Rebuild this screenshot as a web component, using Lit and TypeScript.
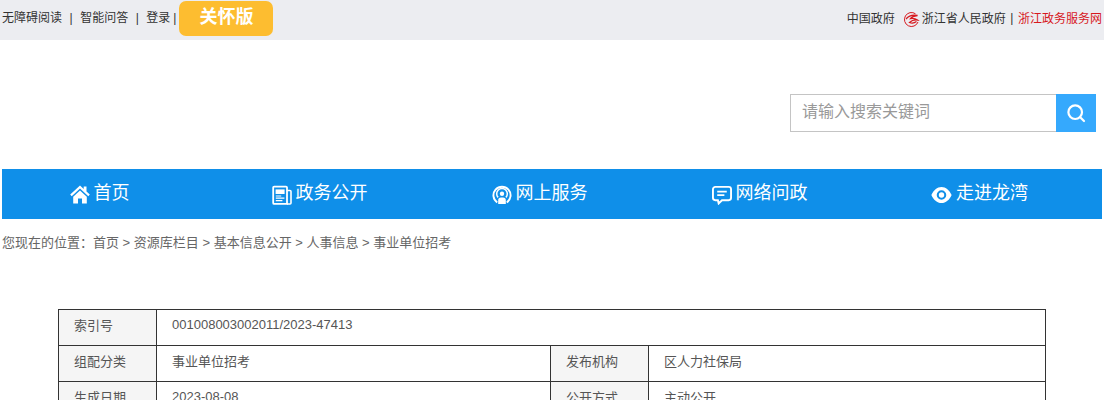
import { LitElement, html, css, svg } from "lit";
import { customElement } from "lit/decorators.js";

const icons = {
  home: svg`<svg class="ic" width="20" height="20" viewBox="0 0 20 20" fill="#fff"><path d="M10 .5 .2 9.600 1.700 11.200 10 3.600 18.300 11.200 19.800 9.600 16.500 6.500V1.500h-2.800v2.400Z"/><path d="M10 5.600 3.200 11.800V18.500h4.800v-5h4v5h4.800V11.800Z"/></svg>`,
  paper: svg`<svg class="ic" width="20" height="20" viewBox="0 0 20 20" fill="none" stroke="#fff"><path d="M1.200 2.600a1 1 0 0 1 1-1H14a1 1 0 0 1 1 1V18.900H2.200a1 1 0 0 1-1-1Z" stroke-width="1.800"/><path d="M15 5.500h3a1 1 0 0 1 1 1V18a1 1 0 0 1-1 1h-3" stroke-width="1.600"/><rect x="3.600" y="4.400" width="9" height="4.600" fill="#fff" stroke="none"/><path d="M3.800 11h5.400M3.800 13.200h8.600M3.800 15.600h6.600" stroke-width="1.200"/></svg>`,
  signal: svg`<svg class="ic" width="20" height="20" viewBox="0 0 21 21" fill="none" stroke="#fff"><path d="M5.500 18.300a9 9 0 1 1 10 0" stroke-width="2"/><path d="M6.400 13a5.600 5.600 0 1 1 8.200 0" stroke-width="1.600"/><circle cx="10.500" cy="9.200" r="2.300" fill="#fff" stroke="none"/><path d="M6.500 20V16a3 3 0 0 1 3-3h2a3 3 0 0 1 3 3v4Z" fill="#fff" stroke="none"/></svg>`,
  chat: svg`<svg class="ic" width="20" height="20" viewBox="0 0 21 21" fill="none" stroke="#fff"><path d="M3.500 2h14a2.500 2.500 0 0 1 2.500 2.500v9a2.500 2.500 0 0 1-2.500 2.500H10.500L7 19.400 6.200 16H3.500A2.500 2.500 0 0 1 1 13.500v-9A2.500 2.500 0 0 1 3.500 2Z" stroke-width="2"/><path d="M5.500 7h10M5.500 10.600h7.500" stroke-width="1.800"/></svg>`,
  eye: svg`<svg class="ic" width="21" height="20" viewBox="0 0 22 20" fill="#fff"><path fill-rule="evenodd" d="M11 1.500C15.500 1.500 19.500 5 21.600 10 19.500 15 15.500 18.500 11 18.500S2.500 15 .4 10C2.500 5 6.500 1.500 11 1.500ZM11 5a5 5 0 1 0 0 10 5 5 0 0 0 0-10Z"/><circle cx="11" cy="10" r="2.800"/></svg>`,
};

@customElement("app-root")
export class AppRoot extends LitElement {
  static styles = css`
    :host { display: block; height: 400px; overflow: hidden; background: #fff;
      font-family: "Liberation Sans", "Noto Sans CJK SC", sans-serif; }
    .top { height: 40px; background: #ecedf1; display: flex; justify-content: space-between; font-size: 12px; color: #333; }
    .left { display: flex; align-items: flex-start; padding-left: 2px; }
    .left span { line-height: 37px; white-space: nowrap; }
    .left .sep { margin: 0 7.5px; }
    .left .sep.last { margin: 0 3px; }
    .care { margin: 1px 0 0 0; width: 94px; height: 35px; box-sizing: border-box; border-radius: 7px; background: #fdbd30;
      color: #fff; font-size: 18px; font-weight: bold; text-align: center; line-height: 32px; }
    .right { display: flex; align-items: center; height: 35px; padding-right: 2px; }
    .right .gov { margin-right: 8px; }
    .logo { margin: 3px 2px 0 0; }
    .right .sep { margin: 0 4.5px; }
    .red { color: #d7191f; }
    .search { display: flex; justify-content: flex-end; padding: 54px 8px 37px 0; }
    .input { width: 266px; height: 38px; box-sizing: border-box; border: 1px solid #c4c4c4; border-right: 0; padding-left: 11px;
      font-size: 16px; line-height: 34px; color: #999; }
    .btn { width: 40px; height: 38px; background: #35a9fd; display: flex; align-items: center; justify-content: center; }
    .nav { margin: 0 2px; height: 50px; background: #0f8fe9; display: flex; gap: 124px; padding-left: 50px; box-sizing: border-box; }
    .item { width: 96px; flex: none; display: flex; justify-content: center; align-items: center; color: #fff;
      font-size: 18px; white-space: nowrap; }
    .item span { display: block; margin: 0 0 7px 4px; }
    .ic { flex: none; margin: 2px 0 0 -1px; }
    .crumb { margin-top: 16px; padding-left: 2px; font-size: 13px; line-height: 16px; color: #666; white-space: pre; }
    table { margin: 58px 0 0 58px; width: 988px; border-collapse: collapse; table-layout: fixed; font-size: 13px; color: #555; }
    td { border: 1px solid #333; height: 36px; padding: 0 15px 6px; box-sizing: border-box; }
    td.l { background: #f5f5f5; }
  `;

  render() {
    const rows = [
      ["组配分类", "事业单位招考", "发布机构", "区人力社保局"],
      ["生成日期", "2023-08-08", "公开方式", "主动公开"],
    ];
    return html`
      <div class="top">
        <div class="left">
          <span>无障碍阅读</span><span class="sep">|</span><span>智能问答</span><span class="sep">|</span><span>登录</span><span class="sep last">|</span>
          <div class="care">关怀版</div>
        </div>
        <div class="right">
          <span class="gov">中国政府</span>
          <svg class="logo" width="17" height="17" viewBox="0 0 17 17" fill="none" stroke="#d7191f">
            <path d="M12.500 2.800A7 7 0 1 0 15 11" stroke-width="1"/>
            <path d="M3 8C6 4.500 10.500 3.500 14.500 4.500 11 5 8.500 6 7.500 7.500 10 7 12.500 7.500 14.500 9 11.500 8.700 8.500 9.500 6.500 11.500 9 12.500 11.500 12 13.500 10.500" stroke-width="1.300"/>
          </svg>
          <span>浙江省人民政府</span><span class="sep">|</span><span class="red">浙江政务服务网</span>
        </div>
      </div>
      <div class="search">
        <div class="input">请输入搜索关键词</div>
        <div class="btn">
          <svg width="20" height="20" viewBox="0 0 20 20" fill="none" stroke="#fff" stroke-width="2.200"><circle cx="9.200" cy="9.200" r="6.800"/><path d="M14.200 14.200 18 18" stroke-linecap="round"/></svg>
        </div>
      </div>
      <div class="nav">
        <div class="item">${icons.home}<span>首页</span></div>
        <div class="item">${icons.paper}<span>政务公开</span></div>
        <div class="item">${icons.signal}<span>网上服务</span></div>
        <div class="item">${icons.chat}<span>网络问政</span></div>
        <div class="item">${icons.eye}<span>走进龙湾</span></div>
      </div>
      <div class="crumb">您现在的位置：首页 &gt; 资源库栏目 &gt; 基本信息公开 &gt; 人事信息 &gt; 事业单位招考</div>
      <table>
        <colgroup><col style="width:98px"><col style="width:394px"><col style="width:98px"><col></colgroup>
        <tr><td class="l">索引号</td><td colspan="3">001008003002011/2023-47413</td></tr>
        ${rows.map((r) => html`<tr><td class="l">${r[0]}</td><td>${r[1]}</td><td class="l">${r[2]}</td><td>${r[3]}</td></tr>`)}
      </table>
    `;
  }
}
